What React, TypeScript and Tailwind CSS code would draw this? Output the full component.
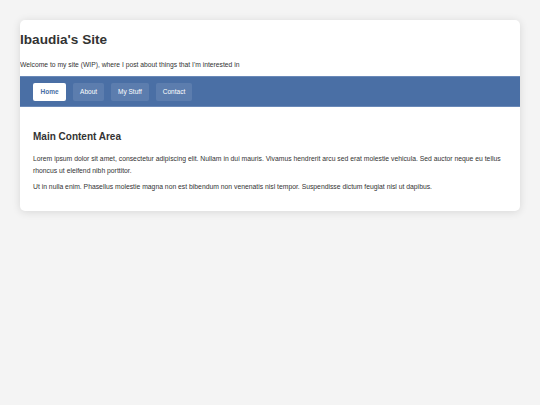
import React from "react";

export default function App() {
  const items = ["Home", "About", "My Stuff", "Contact"];
  return (
    <div
      className="min-h-screen bg-[#f4f4f4] px-[20px] pt-[20px] text-[#333]"
      style={{ fontFamily: '"Liberation Sans", Arial, sans-serif' }}
    >
      <div className="w-[500px] rounded-[5px] bg-white shadow-[0_1px_8px_rgba(0,0,0,0.12)] overflow-hidden">
        <header className="pt-[11px] pb-[7px]">
          <h1 className="text-[13.6px] leading-[17px] font-bold text-[#333]">Ibaudia's Site</h1>
          <p className="mt-[13px] text-[6.75px] leading-[8px] text-[#333]">
            Welcome to my site (WIP), where I post about things that I'm interested in
          </p>
        </header>
        <nav className="bg-[#4a6fa5] h-[31px] flex items-center gap-[7px] pl-[13px] border-y border-[#6a89b8]">
          {items.map((it, i) => (
            <a
              key={it}
              className={
                i === 0
                  ? "h-[18px] flex items-center px-[7.5px] rounded-[2px] bg-white text-[#4a6fa5] font-bold text-[6.5px]"
                  : "h-[18px] flex items-center px-[7px] rounded-[2px] bg-white/10 text-white text-[6.5px]"
              }
            >
              {it}
            </a>
          ))}
        </nav>
        <main className="px-[13px] pt-[24px] pb-[18px]">
          <h2 className="text-[10px] leading-[12px] font-bold text-[#333]">Main Content Area</h2>
          <p className="mt-[10px] text-[6.8px] leading-[12px]">
            Lorem ipsum dolor sit amet, consectetur adipiscing elit. Nullam in dui mauris. Vivamus hendrerit arcu sed erat molestie vehicula. Sed auctor neque eu tellus rhoncus ut eleifend nibh porttitor.
          </p>
          <p className="mt-[4px] text-[6.8px] leading-[12px]">
            Ut in nulla enim. Phasellus molestie magna non est bibendum non venenatis nisl tempor. Suspendisse dictum feugiat nisl ut dapibus.
          </p>
        </main>
      </div>
    </div>
  );
}
